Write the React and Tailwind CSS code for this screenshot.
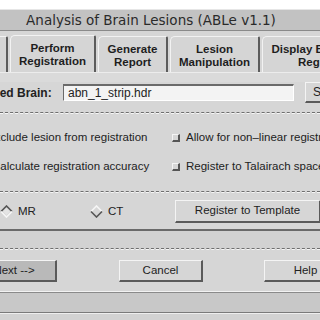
import React from 'react';

const Tab = ({ top, bottom, width, active, className = '' }) => (
  <div
    className={`flex flex-col items-center justify-center pt-[2px] shrink-0 border-t border-l border-[#f2f2f2] border-r-2 border-r-[#5c5c5c] rounded-tl-[5px] rounded-tr-[2px] bg-[#d5d5d5] font-bold text-[11.5px] leading-[13px] text-[#1e1e1e] whitespace-nowrap ${active ? 'h-[37px]' : 'h-[36px]'} ${className}`}
    style={{ width }}
  >
    {top && <span>{top}</span>}
    {bottom && <span>{bottom}</span>}
  </div>
);

const Check = () => (
  <span className="inline-block w-[8px] h-[8px] shrink-0 border-t border-l border-[#f4f4f4] border-r-2 border-b-2 border-r-[#555] border-b-[#555] bg-[#d6d6d6]" />
);

const Groove = () => (
  <div className="h-[2px] border-t border-dashed border-[#6e6e6e] border-b border-b-[#f6f6f6]" />
);

const Button = ({ children, className = '' }) => (
  <div
    className={`flex items-center justify-center shrink-0 h-full border-t border-l border-[#f4f4f4] border-r-2 border-b-2 border-r-[#5a5a5a] border-b-[#5a5a5a] text-[11.5px] text-[#222] whitespace-nowrap ${className}`}
  >
    {children}
  </div>
);

export default function App() {
  return (
    <div className="w-[320px] h-[320px] overflow-hidden flex flex-col bg-[#d6d6d6] font-['Liberation_Sans',Arial,sans-serif] text-[#222]">
      <div className="h-[9px] bg-white shrink-0" />

      {/* title bar */}
      <div className="h-[22px] shrink-0 flex items-center justify-center pr-[18px] bg-[#c2c2c2] border-t border-[#e6e6e6] border-b border-b-[#8a8a8a] font-['DejaVu_Sans',sans-serif] text-[13.5px] text-[#2a2a2a] whitespace-nowrap">
        Analysis of Brain Lesions (ABLe v1.1)
      </div>

      {/* tabs */}
      <div className="h-[41px] shrink-0 flex items-end gap-[2px]">
        <Tab width={60} className="ml-[-52px]" />
        <Tab top="Perform" bottom="Registration" width={86} active />
        <Tab top="Generate" bottom="Report" width={70} />
        <Tab top="Lesion" bottom="Manipulation" width={90} />
        <Tab top="Display Brain Lesions" bottom="Registration" width={140} />
      </div>

      <div className="h-[10px] shrink-0 bg-[#dadada] border-t border-[#ececec]" />

      {/* input row */}
      <div className="h-[21px] shrink-0 flex items-center">
        <div className="w-[63px] shrink-0 flex justify-start overflow-hidden">
          <span className="ml-[-35px] font-bold text-[12px] whitespace-nowrap">Stripped Brain:</span>
        </div>
        <div className="w-[231px] h-[17px] shrink-0 flex items-center pl-[4px] bg-[#f3f3f3] border-t-2 border-l border-[#6a6a6a] border-b border-r border-b-white border-r-white text-[12px]">
          abn_1_strip.hdr
        </div>
        <div className="w-[11px] shrink-0" />
        <Button className="w-[60px] justify-start pl-[7px] text-[12px]">Select</Button>
      </div>

      <div className="h-[9px] shrink-0" />
      <Groove />

      {/* checkbox rows */}
      <div className="h-[10px] shrink-0" />
      <div className="h-[28px] shrink-0 flex items-center text-[11.5px] whitespace-nowrap">
        <div className="w-[172px] shrink-0 overflow-hidden">
          <span className="block ml-[-13px]">Exclude lesion from registration</span>
        </div>
        <Check />
        <span className="ml-[6px]">Allow for non–linear registration</span>
      </div>
      <div className="h-[29px] shrink-0 flex items-center text-[11.5px] whitespace-nowrap">
        <div className="w-[172px] shrink-0 overflow-hidden">
          <span className="block ml-[-8px]">Calculate registration accuracy</span>
        </div>
        <Check />
        <span className="ml-[6px]">Register to Talairach space</span>
      </div>
      <div className="h-[10px] shrink-0" />
      <Groove />

      {/* radio row */}
      <div className="h-[7px] shrink-0" />
      <div className="h-[23px] shrink-0 flex items-center text-[11.5px]">
        <svg width="13" height="13" viewBox="0 0 13 13" className="shrink-0">
          <path d="M1 6.5 L6.5 1 L12 6.5" fill="none" stroke="#555" strokeWidth="1.6" />
          <path d="M1 6.5 L6.5 12 L12 6.5" fill="none" stroke="#f6f6f6" strokeWidth="1.6" />
          <path d="M3 6.5 L6.5 3 L10 6.5 L6.5 10 Z" fill="#e4e4e4" />
        </svg>
        <span className="ml-[5px] w-[72px] shrink-0">MR</span>
        <svg width="13" height="13" viewBox="0 0 13 13" className="shrink-0">
          <path d="M1 6.5 L6.5 1 L12 6.5" fill="none" stroke="#f6f6f6" strokeWidth="1.6" />
          <path d="M1 6.5 L6.5 12 L12 6.5" fill="none" stroke="#555" strokeWidth="1.6" />
        </svg>
        <span className="ml-[5px] w-[67px] shrink-0">CT</span>
        <Button className="w-[146px]">Register to Template</Button>
      </div>

      <div className="h-[6px] shrink-0" />
      <div className="h-[2px] shrink-0 bg-[#6a6a6a]" />
      <div className="h-[17px] shrink-0 bg-[#d2d2d2]" />
      <Groove />

      {/* bottom buttons */}
      <div className="h-[10px] shrink-0" />
      <div className="h-[22px] shrink-0 flex items-center ml-[-28px]">
        <Button className="w-[85px] bg-[#b9b9b9]">Next --&gt;</Button>
        <div className="w-[62px] shrink-0" />
        <Button className="w-[84px]">Cancel</Button>
        <div className="w-[61px] shrink-0" />
        <Button className="w-[84px]">Help</Button>
      </div>

      <div className="h-[9px] shrink-0" />
      <div className="h-[2px] shrink-0 bg-[#f2f2f2] border-b border-[#8a8a8a]" />
      <div className="h-[19px] shrink-0 bg-[#c8c8c8]" />
      <div className="h-[2px] shrink-0 bg-[#7a7a7a] border-b border-[#eee]" />
      <div className="flex-1 bg-[#d2d2d2]" />
    </div>
  );
}
